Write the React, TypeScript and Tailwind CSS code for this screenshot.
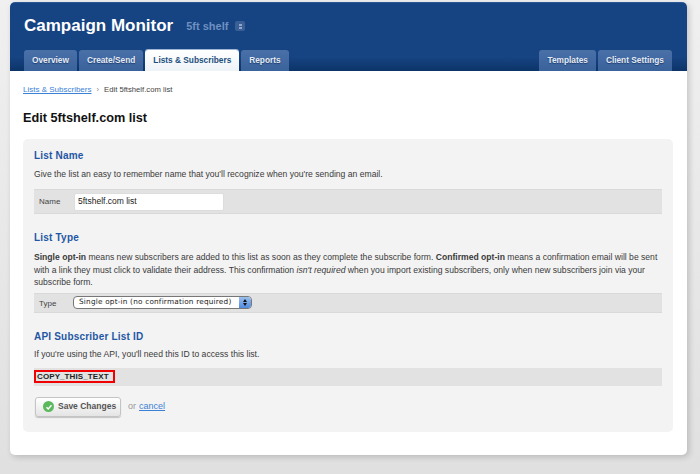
import React from 'react';

const font = { fontFamily: '"Liberation Sans", Arial, sans-serif' };

function Tab({ label, active }: { label: string; active?: boolean }) {
  if (active) {
    return (
      <div className="h-[21px] px-[8px] flex items-center rounded-t-[3px] bg-gradient-to-b from-white to-[#eef3f8] text-[8.3px] font-bold text-[#1d4f7c] shadow-[0_-1px_0_#9db6d6]">
        {label}
      </div>
    );
  }
  return (
    <div className="h-[21px] px-[8px] flex items-center rounded-t-[3px] bg-gradient-to-b from-[#4a70a8] to-[#3a629b] text-[8.3px] font-bold text-[#e6ecf5] [text-shadow:0_1px_1px_#1c3c6e]">
      {label}
    </div>
  );
}

function SectionTitle({ children }: { children: React.ReactNode }) {
  return <h2 className="text-[10px] leading-[13px] font-bold text-[#1f57a4] tracking-[0.2px]">{children}</h2>;
}

export default function App() {
  return (
    <div style={font} className="w-[700px] h-[474px] overflow-hidden bg-gradient-to-b from-[#f0f0f0] to-[#e0e0e0] pl-[10px] pt-[2px]">
      <div className="w-[677px] h-[453px] bg-white rounded-[5px] shadow-[2px_2px_6px_rgba(0,0,0,0.18)] overflow-hidden flex flex-col">
        <header className="h-[69px] shrink-0 bg-gradient-to-b from-[#164382] from-80% to-[#0c3468] border-t border-[#2a5796] px-[14px] flex flex-col justify-between">
          <div className="flex items-center pt-[12px]">
            <span className="text-[17px] leading-[22px] font-bold text-white">Campaign Monitor</span>
            <span className="ml-[13px] text-[11px] font-bold text-[#6f90c0]">5ft shelf</span>
            <span className="ml-[7px] w-[10px] h-[10px] rounded-[2px] bg-[#3a5f97] flex flex-col items-center justify-center gap-[1px]">
              <span className="w-[3px] h-[2px] bg-[#8ea8cc]" />
              <span className="w-[3px] h-[2px] bg-[#8ea8cc]" />
            </span>
          </div>
          <nav className="flex justify-between">
            <div className="flex gap-[2px]">
              <Tab label="Overview" />
              <Tab label="Create/Send" />
              <Tab label="Lists & Subscribers" active />
              <Tab label="Reports" />
            </div>
            <div className="flex gap-[2px] mr-[1px]">
              <Tab label="Templates" />
              <Tab label="Client Settings" />
            </div>
          </nav>
        </header>

        <main className="pl-[13px] pr-[14px]">
          <div className="flex items-center h-[12px] mt-[13px] text-[7.7px] text-[#444]">
            <span className="text-[#3b82d6] underline text-[8px]">Lists &amp; Subscribers</span>
            <span className="mx-[5px] text-[#888]">›</span>
            <span>Edit 5ftshelf.com list</span>
          </div>
          <h1 className="mt-[14px] text-[12.7px] leading-[16px] font-bold text-[#111]">Edit 5ftshelf.com list</h1>

          <section className="mt-[13px] h-[293px] bg-[#f3f3f3] rounded-[5px] px-[11px] pt-[10px]">
            <SectionTitle>List Name</SectionTitle>
            <p className="mt-[6px] text-[8.6px] leading-[13px] text-[#3a3a3a]">
              Give the list an easy to remember name that you'll recognize when you're sending an email.
            </p>
            <div className="mt-[8px] h-[25px] bg-[#e2e2e2] border-y border-[#d9d9d9] flex items-center pl-[5px]">
              <span className="w-[35px] text-[8px] text-[#444]">Name</span>
              <div className="w-[150px] h-[18px] bg-white rounded-[2px] border border-[#ddd] flex items-center pl-[3px] text-[8.5px] text-[#222]">
                5ftshelf.com list
              </div>
            </div>

            <div className="mt-[17px]">
              <SectionTitle>List Type</SectionTitle>
            </div>
            <p className="mt-[7px] text-[8.6px] leading-[12.5px] text-[#3a3a3a]">
              <b>Single opt-in</b> means new subscribers are added to this list as soon as they complete the subscribe form. <b>Confirmed opt-in</b> means a confirmation email will be sent with a link they must click to validate their address. This confirmation <i>isn't required</i> when you import existing subscribers, only when new subscribers join via your subscribe form.
            </p>
            <div className="mt-[4px] h-[20px] bg-[#e2e2e2] border-y border-[#d9d9d9] flex items-center pl-[5px]">
              <span className="w-[34px] text-[8px] text-[#444] pt-[2px]">Type</span>
              <div className="w-[179px] h-[13px] bg-white rounded-[4px] border border-[#777] flex items-center justify-between pl-[5px] text-[#222] overflow-hidden" style={{ fontFamily: '"DejaVu Sans", sans-serif' }}>
                <span className="text-[7.3px] tracking-[0.2px]">Single opt-in (no confirmation required)</span>
                <span className="w-[12px] h-full bg-gradient-to-b from-[#9cc0ee] to-[#4f8ade] flex flex-col items-center justify-center gap-[1px]">
                  <span className="w-0 h-0 border-x-[2px] border-x-transparent border-b-[3px] border-b-[#111]" />
                  <span className="w-0 h-0 border-x-[2px] border-x-transparent border-t-[3px] border-t-[#111]" />
                </span>
              </div>
            </div>

            <div className="mt-[17px]">
              <SectionTitle>API Subscriber List ID</SectionTitle>
            </div>
            <p className="mt-[5px] text-[8.6px] leading-[13px] text-[#3a3a3a]">
              If you're using the API, you'll need this ID to access this list.
            </p>
            <div className="mt-[7px] h-[18px] bg-[#e2e2e2] flex items-center">
              <span className="h-[13px] w-[81px] border-2 border-[#f00000] flex items-center pl-[1px] text-[8px] font-bold text-[#222] tracking-[0.1px]">
                COPY_THIS_TEXT
              </span>
            </div>

            <div className="mt-[11px] ml-[1px] flex items-center">
              <div className="w-[86px] h-[20px] rounded-[3px] bg-gradient-to-b from-white to-[#e4e4e4] border border-[#c4c4c4] shadow-[0_1px_1px_rgba(0,0,0,0.2)] flex items-center pl-[7px] text-[8.5px] font-bold text-[#555]">
                <span className="w-[11px] h-[11px] rounded-full bg-[#5cb85c] flex items-center justify-center mr-[4px] shrink-0">
                  <svg width="8" height="8" viewBox="0 0 8 8" fill="none">
                    <path d="M1.5 4.2 3.2 6 6.5 2.2" stroke="#fff" strokeWidth="1.4" />
                  </svg>
                </span>
                Save Changes
              </div>
              <span className="ml-[7px] text-[9px] text-[#999]">or</span>
              <span className="ml-[3px] text-[9px] text-[#3b82d6] underline">cancel</span>
            </div>
          </section>
        </main>
      </div>
    </div>
  );
}
